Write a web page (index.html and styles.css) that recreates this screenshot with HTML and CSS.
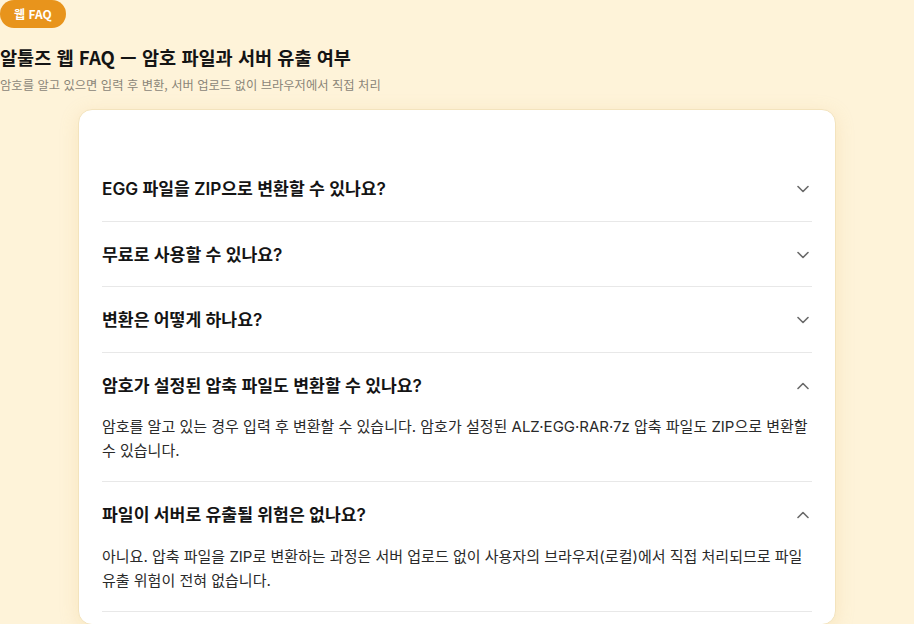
FILE: index.html
```html
<!DOCTYPE html>
<html lang="ko">
<head>
    <meta charset="UTF-8">
    <meta name="viewport" content="width=device-width, initial-scale=1.0">
    <title>알툴즈 웹 FAQ</title>
    <link rel="stylesheet" href="styles.css">
</head>
<body>
    <header class="page-head">
        <span class="badge">웹 FAQ</span>
        <h1>알툴즈 웹 FAQ — 암호 파일과 서버 유출 여부</h1>
        <p class="lead">암호를 알고 있으면 입력 후 변환, 서버 업로드 없이 브라우저에서 직접 처리</p>
    </header>

    <section class="faq-card">
        <!-- FAQ items -->
        <div class="faq-item">
            <button class="faq-q" type="button">
                <span>EGG 파일을 ZIP으로 변환할 수 있나요?</span>
                <svg class="chev" viewBox="0 0 12 8" width="12" height="8"><path d="M1 1.5 6 6.5 11 1.5"/></svg>
            </button>
        </div>

        <div class="faq-item">
            <button class="faq-q" type="button">
                <span>무료로 사용할 수 있나요?</span>
                <svg class="chev" viewBox="0 0 12 8" width="12" height="8"><path d="M1 1.5 6 6.5 11 1.5"/></svg>
            </button>
        </div>

        <div class="faq-item">
            <button class="faq-q" type="button">
                <span>변환은 어떻게 하나요?</span>
                <svg class="chev" viewBox="0 0 12 8" width="12" height="8"><path d="M1 1.5 6 6.5 11 1.5"/></svg>
            </button>
        </div>

        <div class="faq-item open">
            <button class="faq-q" type="button">
                <span>암호가 설정된 압축 파일도 변환할 수 있나요?</span>
                <svg class="chev" viewBox="0 0 12 8" width="12" height="8"><path d="M1 6.5 6 1.5 11 6.5"/></svg>
            </button>
            <p class="faq-a">암호를 알고 있는 경우 입력 후 변환할 수 있습니다. 암호가 설정된 ALZ·EGG·RAR·7z 압축 파일도 ZIP으로 변환할 수 있습니다.</p>
        </div>

        <div class="faq-item open">
            <button class="faq-q" type="button">
                <span>파일이 서버로 유출될 위험은 없나요?</span>
                <svg class="chev" viewBox="0 0 12 8" width="12" height="8"><path d="M1 6.5 6 1.5 11 6.5"/></svg>
            </button>
            <p class="faq-a">아니요. 압축 파일을 ZIP로 변환하는 과정은 서버 업로드 없이 사용자의 브라우저(로컬)에서 직접 처리되므로 파일 유출 위험이 전혀 없습니다.</p>
        </div>
    </section>
</body>
</html>
```

FILE: styles.css
```css
body {
    font-family: Inter, "Noto Sans CJK KR", sans-serif;
    margin: 0;
    padding: 0;
    background-color: #fef3d9;
    color: #111;
}

.page-head {
    padding: 0;
}

.badge {
    display: inline-block;
    height: 28px;
    line-height: 28px;
    padding: 0 14px;
    border-radius: 14px;
    background-color: #e8941c;
    color: #fff;
    font-family: "Noto Sans CJK KR", sans-serif;
    font-size: 12px;
    font-weight: 700;
}

h1 {
    margin: 16px 0 0;
    font-family: "Noto Sans CJK KR", sans-serif;
    font-size: 18.6px;
    font-weight: 700;
    line-height: 26px;
    color: #141414;
}

.lead {
    margin: 6px 0 0;
    font-family: "Noto Sans CJK KR", sans-serif;
    font-size: 12.3px;
    line-height: 18px;
    color: #8a8578;
}

.faq-card {
    width: 758px;
    box-sizing: border-box;
    margin: 15px auto 0;
    padding: 46px 23px 12px;
    background-color: #fff;
    border: 1px solid #f3e3bd;
    border-radius: 14px;
    box-shadow: 0 4px 18px rgba(230, 190, 110, 0.25);
}

.faq-item {
    border-bottom: 1px solid #e8e8e8;
}

.faq-q {
    display: flex;
    align-items: center;
    justify-content: space-between;
    width: 100%;
    padding: 20px 3px 18.5px 0;
    border: none;
    background: none;
    font-family: inherit;
    font-size: 17.2px;
    font-weight: 600;
    line-height: 26px;
    color: #141414;
    text-align: left;
    cursor: pointer;
}

.chev {
    fill: none;
    stroke: #6a6a6a;
    stroke-width: 1.6;
    stroke-linecap: round;
    stroke-linejoin: round;
}

.faq-a {
    margin: -2px 0 0;
    padding: 0 0 18px;
    font-size: 15px;
    line-height: 24px;
    color: #2a2a2a;
}
```
